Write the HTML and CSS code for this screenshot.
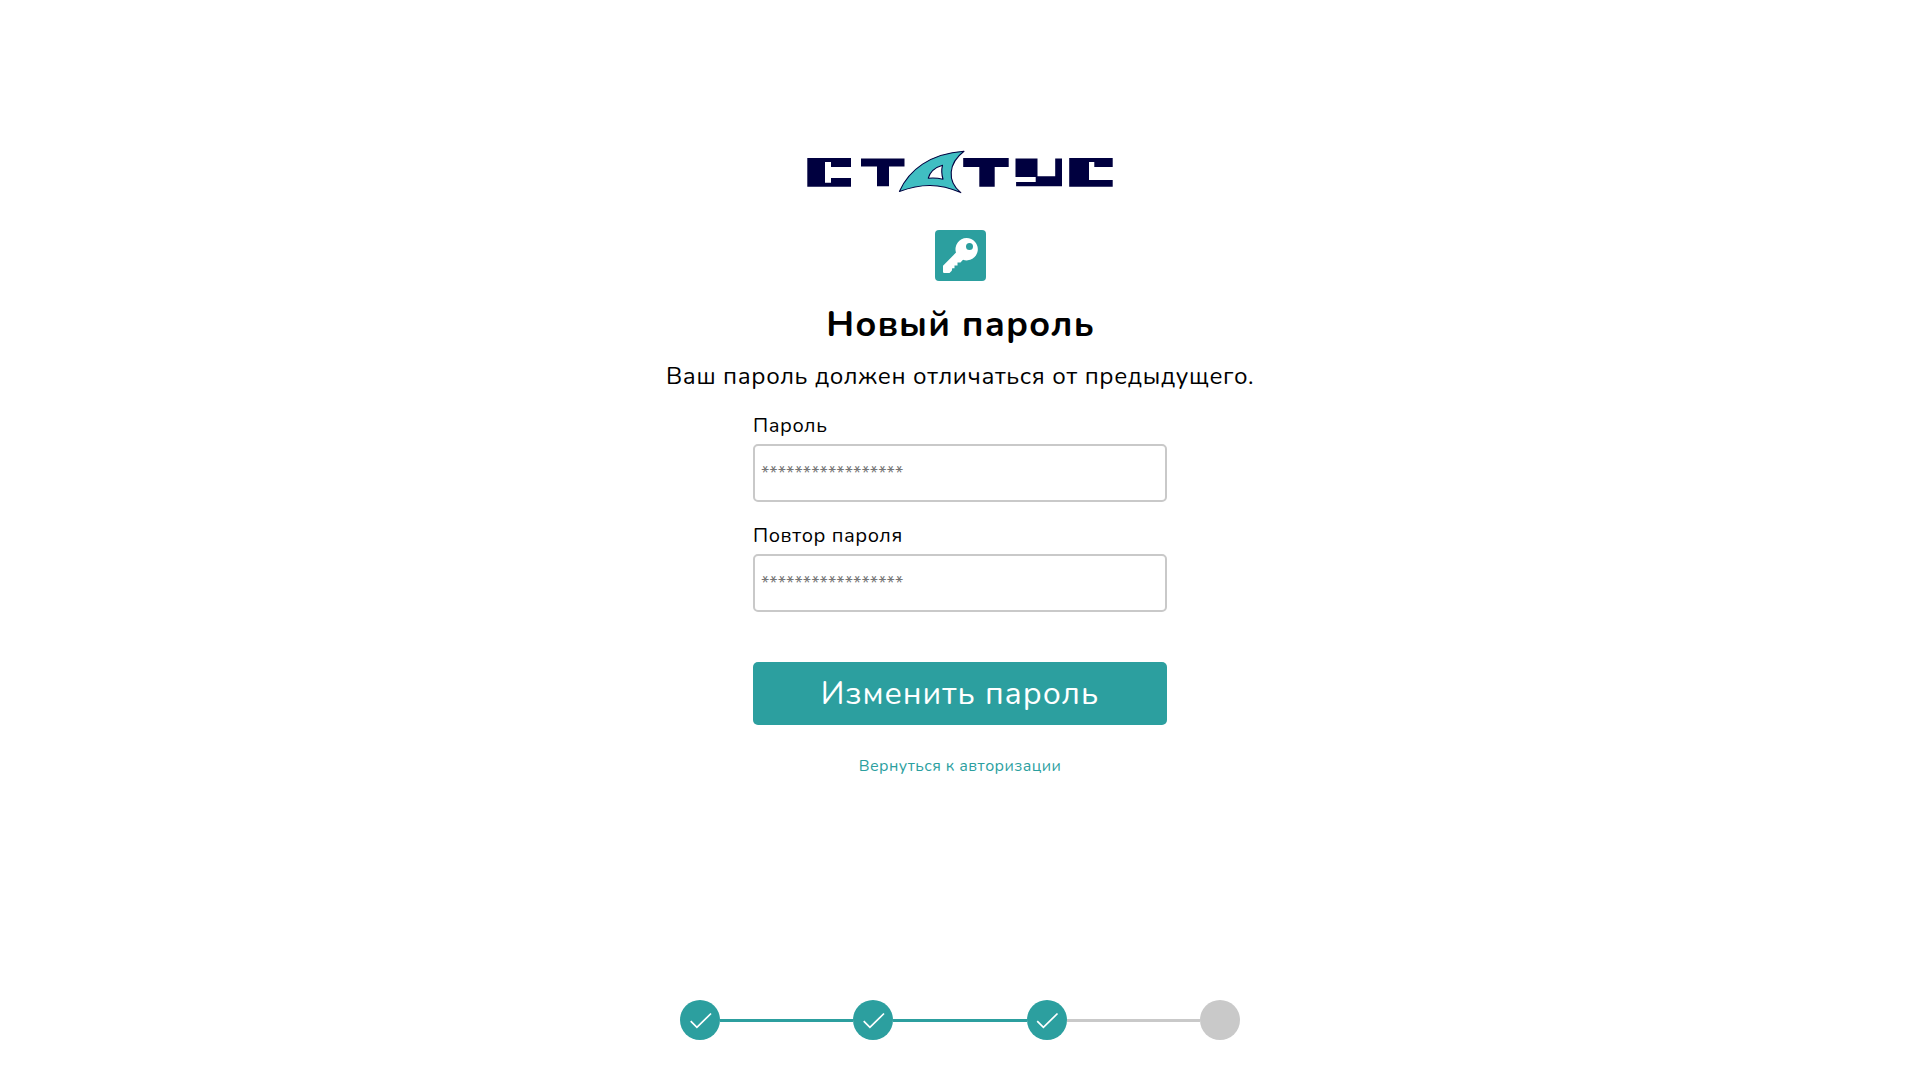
FILE: index.html
```html
<!DOCTYPE html>
<html lang="ru">
<head>
<meta charset="utf-8">
<title>Новый пароль</title>
<link rel="stylesheet" href="styles.css">
</head>
<body>
<main class="page">
  <svg class="logo" viewBox="806 150 308 45" role="img" aria-label="Статус">
    <g fill="#00003f">
      <path d="M807.3 158H851v9h-20v-5h-6v20.7h6v-4.7h20v8.7h-43.7z"/>
      <path d="M861 158.5h43.5v8h-15.5v19.7h-12v-19.7h-16z"/>
      <path d="M963.2 158h45.5v9h-14v19.7h-15.4V167h-16.1z"/>
      <path d="M1015.5 158.5h22v17.8h17.700v-17.800h6.800v27.800h-45.900v-4.200h19.600v-5h-20.200z"/>
      <path d="M1069.200 158h43.500v9h-18.400v-5h-5.300v18h23.700v6.700h-43.500z"/>
    </g>
    <path d="M899.4 191.4C909 170 930 153.500 964 151.200C948.500 163 946.500 181 960.800 192.600C939 183 921 183.500 899.400 191.400zM942.500 165.300C935 167.500 930 172 928.300 178.200C934 177.500 938 178 943 179.200C941.500 174 941.500 169 942.500 165.300z" fill="#40bec2" fill-rule="evenodd" stroke="#00003f" stroke-width="1.1" stroke-linejoin="round"/>
  </svg>

  <div class="badge">
    <svg viewBox="0 0 51 51" width="51" height="51" aria-hidden="true">
      <path fill="#fff" fill-rule="evenodd" d="M31.500 8a11.200 11.200 0 1 1-3.500 21.800L25.500 32.400H22.500V35.400H19.500V38.200H17.200L16.800 40.800L14.500 43H8.800L8 42.200V35.800L21 22.600A11.200 11.200 0 0 1 31.500 8zM34.500 13a3.500 3.500 0 1 0 0 7a3.500 3.500 0 0 0 0-7z"/>
    </svg>
  </div>

  <h1 class="title">Новый пароль</h1>
  <p class="subtitle">Ваш пароль должен отличаться от предыдущего.</p>

  <form class="form">
    <label class="label" for="password">Пароль</label>
    <input class="input" id="password" type="password" placeholder="*****************">
    <label class="label" for="repeat">Повтор пароля</label>
    <input class="input" id="repeat" type="password" placeholder="*****************">
    <button class="submit" type="button">Изменить пароль</button>
  </form>
  <a class="back" href="#">Вернуться к авторизации</a>

  <div class="steps">
    <span class="step done"><svg class="check" viewBox="0 0 40 40"><path d="M10.700 21.200l6.200 6.200L31 13.500"/></svg></span>
    <span class="line done"></span>
    <span class="step done"><svg class="check" viewBox="0 0 40 40"><path d="M10.700 21.200l6.200 6.200L31 13.500"/></svg></span>
    <span class="line done"></span>
    <span class="step done"><svg class="check" viewBox="0 0 40 40"><path d="M10.200 21.200l6.200 6.200L30.500 13.500"/></svg></span>
    <span class="line"></span>
    <span class="step"></span>
  </div>
</main>
</body>
</html>
```
FILE: styles.css
```css
* { box-sizing: border-box; }
body {
  margin: 0;
  background: #fff;
  color: #000;
  font-family: Nunito, "Open Sans", "Noto Sans", sans-serif;
}
.page {
  display: flex;
  flex-direction: column;
  align-items: center;
  height: 1079px;
  padding: 150px 0 39px 1px;
}
.logo { display: block; width: 308px; height: 45px; flex: none; }
.badge {
  width: 51px;
  height: 51px;
  margin: 35px 0 20px 1px;
  border-radius: 4px;
  background: #2c9f9f;
}
.badge svg { display: block; }
.title {
  margin: 0 0 0 1px;
  font-size: 36px;
  line-height: 48px;
  font-weight: 700;
  letter-spacing: .03em;
}
.subtitle {
  margin: 11px 0 20px;
  font-size: 24px;
  line-height: 32px;
  letter-spacing: .027em;
}
.form { display: flex; flex-direction: column; width: 414px; }
.label {
  margin-bottom: 5px;
  font-size: 20px;
  line-height: 27px;
  letter-spacing: .028em;
}
.input {
  height: 58px;
  margin: 0 0 20px;
  padding: 0 6px;
  border: 2px solid #c9c9c9;
  border-radius: 5px;
  background: #fff;
  font: 400 18.6px Nunito, "Open Sans", sans-serif;
}
.input::placeholder { color: #757575; }
.submit {
  height: 63px;
  margin-top: 30px;
  padding: 0;
  border: 0;
  border-radius: 5px;
  background: #2c9f9f;
  color: #fff;
  font: 400 32px/63px Nunito, "Open Sans", sans-serif;
  letter-spacing: .031em;
}
.back {
  margin-top: 30px;
  color: #2c9f9f;
  font-size: 16px;
  line-height: 22px;
  letter-spacing: .027em;
  text-decoration: none;
}
.steps { display: flex; align-items: center; width: 560px; margin-top: auto; }
.step { width: 40px; height: 40px; flex: none; border-radius: 50%; background: #c9c9c9; }
.line { flex: 1; height: 3px; margin-top: 1px; background: #c9c9c9; }
.done { background: #2c9f9f; }
.check { display: block; fill: none; stroke: #fff; stroke-width: 1.7; }
```
